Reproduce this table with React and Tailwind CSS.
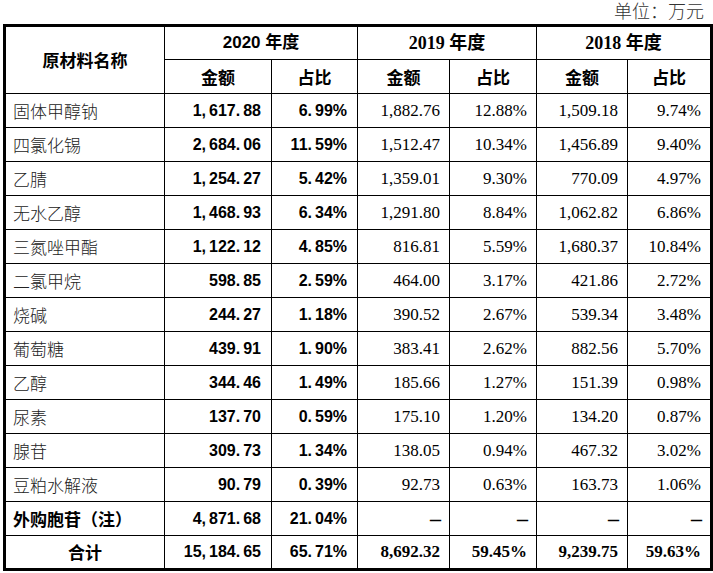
import React from 'react';

const rows = [
    ['固体甲醇钠', '1,617.88', '6.99%', '1,882.76', '12.88%', '1,509.18', '9.74%'],
    ['四氯化锡', '2,684.06', '11.59%', '1,512.47', '10.34%', '1,456.89', '9.40%'],
    ['乙腈', '1,254.27', '5.42%', '1,359.01', '9.30%', '770.09', '4.97%'],
    ['无水乙醇', '1,468.93', '6.34%', '1,291.80', '8.84%', '1,062.82', '6.86%'],
    ['三氮唑甲酯', '1,122.12', '4.85%', '816.81', '5.59%', '1,680.37', '10.84%'],
    ['二氯甲烷', '598.85', '2.59%', '464.00', '3.17%', '421.86', '2.72%'],
    ['烧碱', '244.27', '1.18%', '390.52', '2.67%', '539.34', '3.48%'],
    ['葡萄糖', '439.91', '1.90%', '383.41', '2.62%', '882.56', '5.70%'],
    ['乙醇', '344.46', '1.49%', '185.66', '1.27%', '151.39', '0.98%'],
    ['尿素', '137.70', '0.59%', '175.10', '1.20%', '134.20', '0.87%'],
    ['腺苷', '309.73', '1.34%', '138.05', '0.94%', '467.32', '3.02%'],
    ['豆粕水解液', '90.79', '0.39%', '92.73', '0.63%', '163.73', '1.06%'],
];

// bold sans figures with the wide punctuation of the source pdf
const Wide = ({ value }) => (
    <>
        {value.split(/([,.])/).map((part, i) =>
            part === ',' || part === '.' ? (
                <span key={i} className="mr-[3px]">{part}</span>
            ) : (
                <span key={i}>{part}</span>
            )
        )}
    </>
);

const td = 'border border-black h-[34px] p-0';
const sansBold = "font-['Liberation_Sans','Noto_Sans_CJK_SC',sans-serif] font-bold text-[16px] text-right pr-[10px]";
const serif = "font-['Liberation_Serif','Noto_Sans_CJK_SC',serif] text-[17px] text-right pr-[9px]";
const dash = "font-['Liberation_Serif',serif] font-bold text-[22px] leading-none text-right pr-[8px]";
const cjkHead = "font-['Noto_Sans_CJK_SC',sans-serif] font-bold text-[17px] text-center";

const App = () => {
    return (
        <div className="w-[713px] h-[573px] bg-white text-black overflow-hidden">
            <div className="h-[24px] flex items-center justify-end pr-[9px] font-['Liberation_Serif','Noto_Sans_CJK_SC',serif] font-light text-[18px] text-[#333]">
                单位：万元
            </div>
            <table className="ml-[3px] w-[707px] table-fixed border-collapse border-[3px] border-black">
                <colgroup>
                    <col className="w-[160px]" />
                    <col className="w-[107px]" />
                    <col className="w-[86px]" />
                    <col className="w-[92px]" />
                    <col className="w-[87px]" />
                    <col className="w-[91px]" />
                    <col className="w-[84px]" />
                </colgroup>
                <thead>
                    <tr>
                        <th rowSpan={2} className={`${td} ${cjkHead}`}>原材料名称</th>
                        <th colSpan={2} className={`${td} text-center font-['Liberation_Sans','Noto_Sans_CJK_SC',sans-serif] font-bold text-[17px]`}>2020 年度</th>
                        <th colSpan={2} className={`${td} text-center font-['Liberation_Serif','Noto_Sans_CJK_SC',serif] font-bold text-[18px]`}>2019 年度</th>
                        <th colSpan={2} className={`${td} text-center font-['Liberation_Serif','Noto_Sans_CJK_SC',serif] font-bold text-[18px]`}>2018 年度</th>
                    </tr>
                    <tr>
                        <th className={`${td} ${cjkHead}`}>金额</th>
                        <th className={`${td} ${cjkHead}`}>占比</th>
                        <th className={`${td} ${cjkHead}`}>金额</th>
                        <th className={`${td} ${cjkHead}`}>占比</th>
                        <th className={`${td} ${cjkHead}`}>金额</th>
                        <th className={`${td} ${cjkHead}`}>占比</th>
                    </tr>
                </thead>
                <tbody>
                    {rows.map((r) => (
                        <tr key={r[0]}>
                            <td className={`${td} pl-[7px] font-['Noto_Sans_CJK_SC',sans-serif] font-light text-[17px] text-[#222]`}>{r[0]}</td>
                            <td className={`${td} ${sansBold}`}><Wide value={r[1]} /></td>
                            <td className={`${td} ${sansBold}`}><Wide value={r[2]} /></td>
                            <td className={`${td} ${serif}`}>{r[3]}</td>
                            <td className={`${td} ${serif}`}>{r[4]}</td>
                            <td className={`${td} ${serif}`}>{r[5]}</td>
                            <td className={`${td} ${serif}`}>{r[6]}</td>
                        </tr>
                    ))}
                    <tr>
                        <td className={`${td} pl-[7px] font-['Noto_Sans_CJK_SC',sans-serif] font-bold text-[17px]`}>外购胞苷（注）</td>
                        <td className={`${td} ${sansBold}`}><Wide value="4,871.68" /></td>
                        <td className={`${td} ${sansBold}`}><Wide value="21.04%" /></td>
                        <td className={`${td} ${dash}`}>–</td>
                        <td className={`${td} ${dash}`}>–</td>
                        <td className={`${td} ${dash}`}>–</td>
                        <td className={`${td} ${dash}`}>–</td>
                    </tr>
                    <tr>
                        <td className={`${td} ${cjkHead}`}>合计</td>
                        <td className={`${td} ${sansBold}`}><Wide value="15,184.65" /></td>
                        <td className={`${td} ${sansBold}`}><Wide value="65.71%" /></td>
                        <td className={`${td} ${serif} font-bold`}>8,692.32</td>
                        <td className={`${td} ${serif} font-bold`}>59.45%</td>
                        <td className={`${td} ${serif} font-bold`}>9,239.75</td>
                        <td className={`${td} ${serif} font-bold`}>59.63%</td>
                    </tr>
                </tbody>
            </table>
        </div>
    );
};

export default App;
